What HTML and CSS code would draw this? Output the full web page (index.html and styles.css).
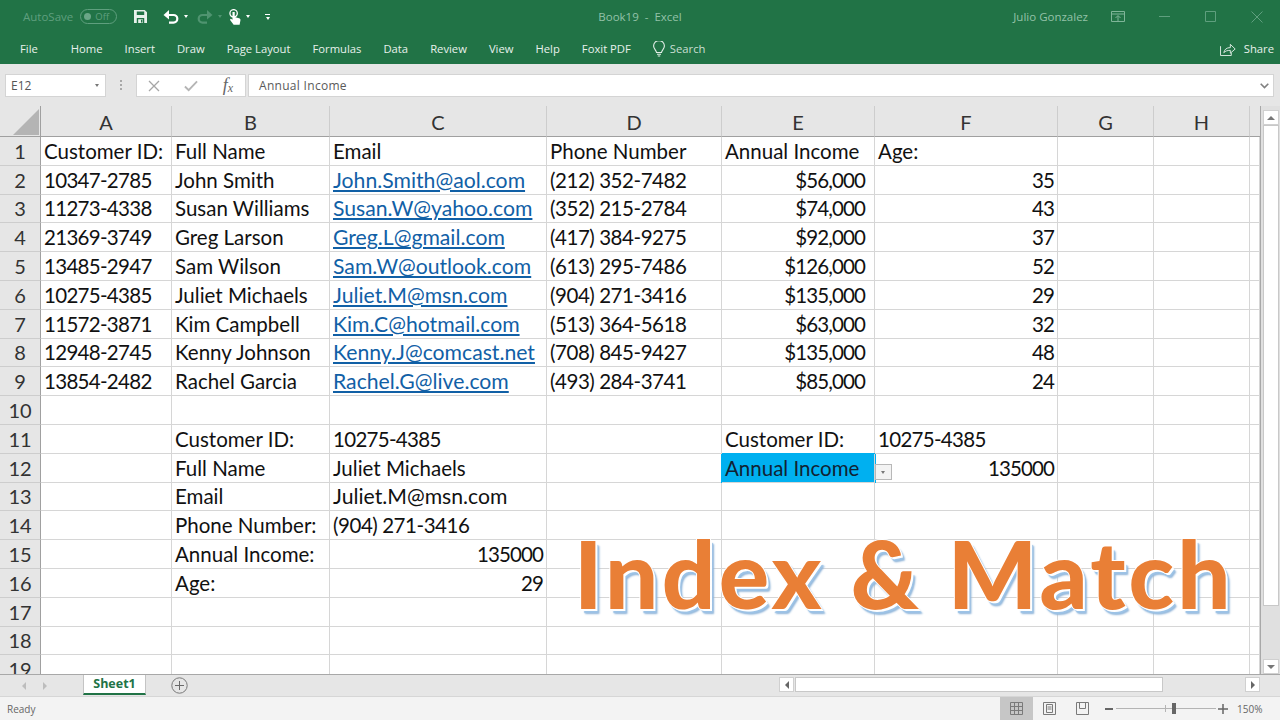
FILE: index.html

```html
<!DOCTYPE html>
<html lang="en">
<head>
  <meta charset="UTF-8" />
  <title>Book19 - Excel</title>
  <link rel="stylesheet" href="styles.css">
</head>
<body>
  <header class="ribbon">
    <div class="titlebar">
      <div class="quick">
        <span class="autosave">AutoSave</span>
        <span class="toggle"><i class="toggle-dot"></i>Off</span>
        <svg class="qa-save" width="13" height="13" viewBox="0 0 14 14"><path fill="#e8f1ec" d="M0 0h11.500L14 2.500V14H0z"/><path fill="#217346" d="M3 1.500h8v4H3zM3 8.500h8V14H3z"/><path fill="#e8f1ec" d="M4.500 10h5v4h-5z"/><path fill="#217346" d="M7.500 10.500H9v3H7.500z"/></svg>
        <svg class="qa-undo" width="16" height="14" viewBox="0 0 16 14"><path fill="none" stroke="#fff" stroke-width="2.200" d="M2.500 5h8a3.800 3.800 0 0 1 0 7.600H6"/><path fill="#fff" d="M6 0v9.500L.5 5z"/></svg>
        <i class="caret"></i>
        <svg class="qa-redo" width="16" height="14" viewBox="0 0 16 14"><path fill="none" stroke="#4f9470" stroke-width="2.200" d="M13.500 5h-8a3.800 3.800 0 0 0 0 7.600H10"/><path fill="#4f9470" d="M10 0v9.500L15.500 5z"/></svg>
        <i class="caret caret-off"></i>
        <svg class="qa-touch" width="12" height="16" viewBox="0 0 13 17"><circle cx="5" cy="4.500" r="4" fill="none" stroke="#fff" stroke-width="1.400"/><path fill="#fff" d="M3.800 3h2.400v5.500l5.500 1.500.8 1.500-1 5.500H5L1 11.500l1-1 1.800 1z"/></svg>
        <i class="caret"></i>
        <span class="customize"><i class="customize-bar"></i><i class="caret caret-small"></i></span>
      </div>
      <div class="doc-title">Book19&nbsp; -&nbsp; Excel</div>
      <div class="window-side">
        <span class="user">Julio Gonzalez</span>
        <svg class="win-display" width="14" height="11" viewBox="0 0 14 11"><path fill="none" stroke="#7fb598" d="M.5.500h13v10H.5zM.5 3h13M7 5v5.500M4.500 7L7 4.500 9.500 7"/></svg>
        <svg class="win-min" width="11" height="1" viewBox="0 0 11 1"><path stroke="#5f9f7e" d="M0 .5h11"/></svg>
        <svg class="win-max" width="11" height="11" viewBox="0 0 11 11"><path fill="none" stroke="#5f9f7e" d="M.5.500h10v10H.5z"/></svg>
        <svg class="win-close" width="12" height="12" viewBox="0 0 12 12"><path stroke="#5f9f7e" d="M.5.500l11 11M11.500.500l-11 11"/></svg>
      </div>
    </div>
    <nav class="tabs">
      <span class="tab-file">File</span>
      <span>Home</span>
      <span>Insert</span>
      <span>Draw</span>
      <span>Page Layout</span>
      <span>Formulas</span>
      <span>Data</span>
      <span>Review</span>
      <span>View</span>
      <span>Help</span>
      <span>Foxit PDF</span>
      <span class="tell-me">
        <svg width="12" height="16" viewBox="0 0 12 16"><path fill="none" stroke="#e3efe8" stroke-width="1.100" d="M3.500 11.500C3.200 9 .6 7.800.6 5a5.400 5.400 0 0 1 10.800 0c0 2.800-2.600 4-2.900 6.500zM4 13.300h4M4.800 15h2.400"/></svg>
        Search
      </span>
      <span class="share">
        <svg width="16" height="14" viewBox="0 0 17 15"><path fill="none" stroke="#e3efe8" d="M.5 4.500v10h11.500v-3M4 11.500c.5-3.500 3-5.500 7-5.500V2.500L16.200 7.500 11 12V9c-3 0-5.500.5-7 2.500z"/></svg>
        Share
      </span>
    </nav>
  </header>

  <section class="formula-bar">
    <div class="name-box">E12<i class="caret caret-gray"></i></div>
    <div class="grip"></div>
    <div class="fx-buttons">
      <svg width="12" height="12" viewBox="0 0 12 12"><path stroke="#a6a6a6" stroke-width="1.300" d="M1 1l10 10M11 1L1 11"/></svg>
      <svg width="14" height="12" viewBox="0 0 15 12"><path fill="none" stroke="#b5b5b5" stroke-width="2" d="M1 6.500L5 10.500 14 1"/></svg>
      <span class="fx">f<sub>x</sub></span>
    </div>
    <div class="formula-input">
      <span class="formula-text">Annual Income</span>
      <svg width="9" height="6" viewBox="0 0 9 6"><path fill="none" stroke="#808080" stroke-width="1.600" d="M.7.700L4.500 4.500 8.300.700"/></svg>
    </div>
  </section>

  <main class="sheet">
    <div class="grid-wrap">
      <table class="grid">
        <colgroup>
          <col class="col-head"><col class="col-a"><col class="col-b"><col class="col-c"><col class="col-d"><col class="col-e"><col class="col-f"><col class="col-g"><col class="col-h"><col>
        </colgroup>
        <thead>
          <tr>
            <th class="corner"><svg width="26" height="26" viewBox="0 0 26 26"><path fill="#b4b4b4" d="M26 0v26H0z"/></svg></th>
            <th>A</th><th>B</th><th>C</th><th>D</th><th>E</th><th>F</th><th>G</th><th>H</th><th class="head-rest"></th>
          </tr>
        </thead>
        <tbody>
          <tr><th>1</th><td>Customer ID:</td><td>Full Name</td><td>Email</td><td>Phone Number</td><td>Annual Income</td><td>Age:</td><td></td><td></td><td></td></tr>
          <tr><th>2</th><td class="cust-id">10347-2785</td><td>John Smith</td><td><a>John.Smith@aol.com</a></td><td class="phone">(212) 352-7482</td><td class="num money">$56,000</td><td class="num">35</td><td></td><td></td><td></td></tr>
          <tr><th>3</th><td class="cust-id">11273-4338</td><td>Susan Williams</td><td><a>Susan.W@yahoo.com</a></td><td class="phone">(352) 215-2784</td><td class="num money">$74,000</td><td class="num">43</td><td></td><td></td><td></td></tr>
          <tr><th>4</th><td class="cust-id">21369-3749</td><td>Greg Larson</td><td><a>Greg.L@gmail.com</a></td><td class="phone">(417) 384-9275</td><td class="num money">$92,000</td><td class="num">37</td><td></td><td></td><td></td></tr>
          <tr><th>5</th><td class="cust-id">13485-2947</td><td>Sam Wilson</td><td><a>Sam.W@outlook.com</a></td><td class="phone">(613) 295-7486</td><td class="num money">$126,000</td><td class="num">52</td><td></td><td></td><td></td></tr>
          <tr><th>6</th><td class="cust-id">10275-4385</td><td>Juliet Michaels</td><td><a>Juliet.M@msn.com</a></td><td class="phone">(904) 271-3416</td><td class="num money">$135,000</td><td class="num">29</td><td></td><td></td><td></td></tr>
          <tr><th>7</th><td class="cust-id">11572-3871</td><td>Kim Campbell</td><td><a>Kim.C@hotmail.com</a></td><td class="phone">(513) 364-5618</td><td class="num money">$63,000</td><td class="num">32</td><td></td><td></td><td></td></tr>
          <tr><th>8</th><td class="cust-id">12948-2745</td><td>Kenny Johnson</td><td><a>Kenny.J@comcast.net</a></td><td class="phone">(708) 845-9427</td><td class="num money">$135,000</td><td class="num">48</td><td></td><td></td><td></td></tr>
          <tr><th>9</th><td class="cust-id">13854-2482</td><td>Rachel Garcia</td><td><a>Rachel.G@live.com</a></td><td class="phone">(493) 284-3741</td><td class="num money">$85,000</td><td class="num">24</td><td></td><td></td><td></td></tr>
          <tr><th>10</th><td></td><td></td><td></td><td></td><td></td><td></td><td></td><td></td><td></td></tr>
          <tr><th>11</th><td></td><td>Customer ID:</td><td class="cust-id">10275-4385</td><td></td><td>Customer ID:</td><td class="cust-id">10275-4385</td><td></td><td></td><td></td></tr>
          <tr><th>12</th><td></td><td>Full Name</td><td>Juliet Michaels</td><td></td><td class="selected">Annual Income<span class="dropdown"></span></td><td class="num">135000</td><td></td><td></td><td></td></tr>
          <tr><th>13</th><td></td><td>Email</td><td class="mail">Juliet.M@msn.com</td><td></td><td></td><td></td><td></td><td></td><td></td></tr>
          <tr><th>14</th><td></td><td>Phone Number:</td><td class="phone">(904) 271-3416</td><td></td><td></td><td></td><td></td><td></td><td></td></tr>
          <tr><th>15</th><td></td><td>Annual Income:</td><td class="num">135000</td><td></td><td></td><td></td><td></td><td></td><td></td></tr>
          <tr><th>16</th><td></td><td>Age:</td><td class="num">29</td><td></td><td></td><td></td><td></td><td></td><td></td></tr>
          <tr><th>17</th><td></td><td></td><td></td><td></td><td></td><td></td><td></td><td></td><td></td></tr>
          <tr><th>18</th><td></td><td></td><td></td><td></td><td></td><td></td><td></td><td></td><td></td></tr>
          <tr><th>19</th><td></td><td></td><td></td><td></td><td></td><td></td><td></td><td></td><td></td></tr>
        </tbody>
      </table>
      <div class="wordart">Index &amp; Match</div>
    </div>
    <div class="vscroll">
      <span class="scroll-btn"><i class="arrow-up"></i></span>
      <span class="vthumb"></span>
      <span class="scroll-btn scroll-btn-down"><i class="arrow-down"></i></span>
    </div>
  </main>

  <section class="sheet-bar">
    <i class="nav-left"></i>
    <i class="nav-right"></i>
    <span class="sheet-tab">Sheet1</span>
    <svg class="add-sheet" width="17" height="17" viewBox="0 0 17 17"><circle cx="8.500" cy="8.500" r="7.700" fill="none" stroke="#7a7a7a"/><path stroke="#6a6a6a" d="M8.500 4v9M4 8.500h9"/></svg>
    <div class="hscroll">
      <span class="hbtn"><i class="arrow-left"></i></span>
      <span class="hthumb"></span>
      <span class="hbtn hbtn-right"><i class="arrow-right"></i></span>
    </div>
  </section>

  <footer class="status">
    <span class="ready">Ready</span>
    <div class="view-buttons">
      <span class="view view-on"><svg width="13" height="13" viewBox="0 0 13 13"><path fill="none" stroke="#7a7a7a" d="M.5.500h12v12H.5zM4.500.500v12M8.500.500v12M.5 4.500h12M.5 8.500h12"/></svg></span>
      <span class="view"><svg width="13" height="13" viewBox="0 0 13 13"><path fill="none" stroke="#7a7a7a" d="M.5.500h12v12H.5zM3.500 2.500h6v8h-6zM4.500 5h4M4.500 7h4"/></svg></span>
      <span class="view"><svg width="13" height="13" viewBox="0 0 13 13"><path fill="none" stroke="#7a7a7a" d="M.5.500h12v12H.5zM3.500.500v6h6v-6"/></svg></span>
    </div>
    <div class="zoom">
      <i class="zoom-minus"></i>
      <div class="slider"><i class="slider-tick"></i><i class="slider-thumb"></i></div>
      <svg width="10" height="10" viewBox="0 0 10 10"><path stroke="#666" stroke-width="1.500" d="M5 0v10M0 5h10"/></svg>
      <span class="zoom-value">150%</span>
    </div>
  </footer>
</body>
</html>
```

FILE: styles.css

```css
html, body {
  margin: 0;
  height: 100%;
}
body {
  width: 1280px;
  height: 720px;
  overflow: hidden;
  display: flex;
  flex-direction: column;
  font-family: "Open Sans", "Noto Sans", sans-serif;
  font-size: 12px;
  background: #e6e6e6;
  color: #444;
}
svg {
  display: block;
  flex: none;
}

/* ribbon */
.ribbon {
  background: #217346;
  height: 64px;
  flex: none;
}
.titlebar {
  height: 33px;
  display: grid;
  grid-template-columns: 1fr auto 1fr;
  align-items: center;
}
.quick {
  display: flex;
  align-items: center;
  padding-left: 23px;
}
.autosave {
  color: #5f9f7e;
  font-size: 11.500px;
}
.toggle {
  margin-left: 7px;
  width: 37px;
  height: 15px;
  box-sizing: border-box;
  border: 1px solid #5f9f7e;
  border-radius: 8px;
  color: #5f9f7e;
  font-size: 9.500px;
  display: flex;
  align-items: center;
  padding-left: 3px;
  gap: 4px;
}
.toggle-dot {
  width: 7px;
  height: 7px;
  border-radius: 50%;
  background: #6aa687;
}
.qa-save { margin-left: 17px; }
.qa-undo { margin-left: 16px; }
.qa-redo { margin-left: 9px; }
.qa-touch { margin-left: 7px; }
.caret {
  margin-left: 5px;
  width: 0;
  height: 0;
  border: 2.500px solid transparent;
  border-top: 3px solid #fff;
  border-bottom: 0;
}
.caret-off { border-top-color: #4f9470; }
.customize {
  margin-left: 15px;
  display: flex;
  flex-direction: column;
  gap: 2px;
  align-items: center;
}
.customize-bar {
  width: 5px;
  height: 1px;
  background: #fff;
}
.caret-small { margin-left: 0; }
.doc-title {
  color: #93c2a8;
  font-size: 11.500px;
}
.window-side {
  display: flex;
  align-items: center;
  justify-content: flex-end;
}
.user {
  color: #93c2a8;
  font-size: 11.500px;
}
.win-display { margin-left: 23px; }
.win-min { margin-left: 34px; }
.win-max { margin-left: 35px; }
.win-close { margin-left: 35px; margin-right: 17px; }

.tabs {
  height: 31px;
  display: flex;
  align-items: center;
  gap: 22px;
  padding-left: 20px;
  box-sizing: border-box;
  color: #e8f1ec;
  font-size: 11.250px;
}
.tab-file { margin-right: 11px; }
.tell-me {
  display: flex;
  align-items: center;
  gap: 5px;
  color: #c9dfd2;
}
.share {
  margin-left: auto;
  margin-right: 6px;
  display: flex;
  align-items: center;
  gap: 8px;
}

/* formula bar */
.formula-bar {
  height: 42px;
  flex: none;
  display: flex;
  align-items: flex-start;
  padding: 10px 6px 0 5px;
  box-sizing: border-box;
}
.name-box, .fx-buttons, .formula-input {
  height: 23px;
  box-sizing: border-box;
  background: #fff;
  border: 1px solid #d4d4d4;
  display: flex;
  align-items: center;
}
.name-box {
  width: 101px;
  padding: 0 6px 0 5px;
  justify-content: space-between;
  color: #555;
}
.caret-gray { border-top-color: #777; }
.grip {
  width: 2px;
  height: 11px;
  margin: 6px 14px 0 14px;
  background: repeating-linear-gradient(#a8a8a8 0 2px, transparent 2px 4px);
}
.fx-buttons {
  width: 110px;
  padding: 0 12px 0 11px;
  justify-content: space-between;
}
.fx {
  font-family: "Liberation Serif", serif;
  font-style: italic;
  font-size: 18px;
  color: #666;
}
.fx sub {
  font-size: 12px;
  vertical-align: -1px;
  line-height: 0;
}
.formula-input {
  flex: 1;
  margin-left: 2px;
  padding: 0 4px 0 10px;
  justify-content: space-between;
  color: #5a5a5a;
}
.formula-text {
  letter-spacing: .3px;
}

/* sheet */
.sheet {
  height: 569px;
  flex: none;
  display: flex;
  border-bottom: 1px solid #a8a8a8;
  box-sizing: border-box;
}
.grid-wrap {
  width: 1261px;
  box-sizing: border-box;
  border-right: 1px solid #a8a8a8;
  position: relative;
  overflow: hidden;
}
.grid {
  table-layout: fixed;
  border-collapse: separate;
  border-spacing: 0;
  width: 1260px;
  background: #fff;
  font-family: Lato, "Open Sans", sans-serif;
  font-size: 20.500px;
  color: #111;
}
.col-head { width: 41px; }
.col-a { width: 131px; }
.col-b { width: 158px; }
.col-c { width: 217px; }
.col-d { width: 175px; }
.col-e { width: 153px; }
.col-f { width: 183px; }
.col-g { width: 96px; }
.col-h { width: 96px; }
.grid th {
  background: #e6e6e6;
  font-weight: 400;
  color: #333;
  padding: 0;
  box-sizing: border-box;
  font-size: 20px;
}
.grid thead th {
  height: 31px;
  padding-top: 1px;
  border-right: 1px solid #cdcdcd;
  border-bottom: 1px solid #a0a0a0;
}
.grid thead .corner {
  border-right: 1px solid #a0a0a0;
}
.grid thead .head-rest {
  border-right: 0;
}
.corner svg {
  margin: 1px 0 0 13px;
}
.grid tbody th {
  height: 28.800px;
  border-right: 1px solid #a0a0a0;
  border-bottom: 1px solid #cdcdcd;
}
.grid td {
  height: 28.800px;
  box-sizing: border-box;
  padding: 0 3px;
  border-right: 1px solid #d6d6d6;
  border-bottom: 1px solid #d6d6d6;
  white-space: nowrap;
  overflow: visible;
}
.grid .num {
  text-align: right;
  letter-spacing: -.9px;
}
.grid .money {
  padding-right: 9px;
}
.grid .cust-id {
  letter-spacing: -.7px;
}
.grid .phone {
  letter-spacing: -.45px;
}
.grid a {
  color: #1160a6;
  text-decoration: underline;
  font-size: 21.200px;
}
.grid .mail {
  font-size: 21.200px;
}
.grid .selected {
  background: #00b0f0;
  position: relative;
  color: #123;
  box-shadow: -1px 0 0 #00b0f0, 1px 0 0 #00b0f0, 0 -1px 0 #00b0f0;
}
.dropdown {
  position: absolute;
  left: 100%;
  margin-left: 1px;
  top: 10px;
  width: 17px;
  height: 16px;
  box-sizing: border-box;
  background: #f3f3f3;
  border: 1px solid #b8b8b8;
}
.dropdown::after {
  content: "";
  position: absolute;
  left: 5px;
  top: 6px;
  border: 2.500px solid transparent;
  border-top: 3px solid #777;
  border-bottom: 0;
}
.wordart {
  position: absolute;
  left: 574px;
  top: 407px;
  font-family: Lato, sans-serif;
  font-weight: 900;
  font-size: 94px;
  letter-spacing: 3.300px;
  line-height: 120px;
  white-space: nowrap;
  color: #e97f36;
  text-shadow:
    1px 0 0 #fff, -1px 0 0 #fff, 0 1px 0 #fff, 0 -1px 0 #fff,
    2px 2px 0 #fff,
    3px 4px 1px #9dc3e6, 4px 5px 2px #8fb4d8;
}

/* scrollbars */
.vscroll {
  flex: 1;
  display: flex;
  flex-direction: column;
  align-items: center;
  background: #e0e0e0;
  padding: 4px 0 0;
}
.scroll-btn {
  width: 16px;
  height: 15px;
  flex: none;
  background: #fff;
  border: 1px solid #d0d0d0;
  box-sizing: border-box;
  display: flex;
  align-items: center;
  justify-content: center;
}
.scroll-btn-down {
  margin-top: auto;
}
.vthumb {
  width: 16px;
  height: 481px;
  background: #fff;
  border: 1px solid #c8c8c8;
  box-sizing: border-box;
}
.arrow-up, .arrow-down {
  width: 0;
  height: 0;
  border: 4px solid transparent;
}
.arrow-up { border-bottom: 4px solid #777; border-top: 0; }
.arrow-down { border-top: 4px solid #777; border-bottom: 0; }

.sheet-bar {
  height: 22px;
  flex: none;
  display: flex;
  align-items: flex-start;
  background: #e6e6e6;
  border-bottom: 1px solid #d6d6d6;
  box-sizing: border-box;
  padding-left: 22px;
}
.nav-left, .nav-right {
  width: 0;
  height: 0;
  margin-top: 7px;
  border: 4px solid transparent;
}
.nav-left { border-right: 4px solid #bdbdbd; border-left: 0; }
.nav-right { border-left: 4px solid #bdbdbd; border-right: 0; margin-left: 17px; }
.sheet-tab {
  margin-left: 36px;
  width: 63px;
  height: 20px;
  box-sizing: border-box;
  background: #fff;
  border: 1px solid #c4c4c4;
  border-top: 0;
  border-bottom: 2px solid #217346;
  color: #217346;
  font-weight: 700;
  text-align: center;
  line-height: 17px;
  font-size: 12.500px;
}
.add-sheet {
  margin: 2px 0 0 25px;
}
.hscroll {
  position: absolute;
  left: 779px;
  width: 481px;
  height: 19px;
  display: flex;
  align-items: center;
  gap: 1px;
}
.hbtn {
  width: 15px;
  height: 15px;
  background: #fff;
  border: 1px solid #d0d0d0;
  box-sizing: border-box;
  display: flex;
  align-items: center;
  justify-content: center;
}
.hbtn-right {
  margin-left: auto;
}
.hthumb {
  width: 368px;
  height: 15px;
  background: #fff;
  border: 1px solid #c8c8c8;
  box-sizing: border-box;
}
.arrow-left, .arrow-right {
  width: 0;
  height: 0;
  border: 4px solid transparent;
}
.arrow-left { border-right: 4px solid #666; border-left: 0; }
.arrow-right { border-left: 4px solid #666; border-right: 0; }

/* status bar */
.status {
  flex: 1;
  display: flex;
  align-items: center;
  background: #f3f3f3;
  font-size: 10px;
  color: #666;
  padding-left: 7px;
}
.view-buttons {
  margin-left: auto;
  display: flex;
  align-self: stretch;
}
.view {
  width: 33px;
  display: flex;
  align-items: center;
  justify-content: center;
}
.view-on {
  background: #c6c6c6;
}
.zoom {
  margin-left: 6px;
  display: flex;
  align-items: center;
  width: 175px;
  box-sizing: border-box;
}
.zoom-minus {
  width: 8px;
  height: 2px;
  background: #666;
}
.slider {
  position: relative;
  width: 100px;
  height: 1px;
  margin: 0 2px 0 3px;
  background: #b4b4b4;
}
.slider-tick {
  position: absolute;
  left: 49px;
  top: -3px;
  width: 1px;
  height: 7px;
  background: #b4b4b4;
}
.slider-thumb {
  position: absolute;
  left: 56px;
  top: -5px;
  width: 4px;
  height: 11px;
  background: #666;
}
.zoom-value {
  margin-left: 9px;
  white-space: nowrap;
}
```
